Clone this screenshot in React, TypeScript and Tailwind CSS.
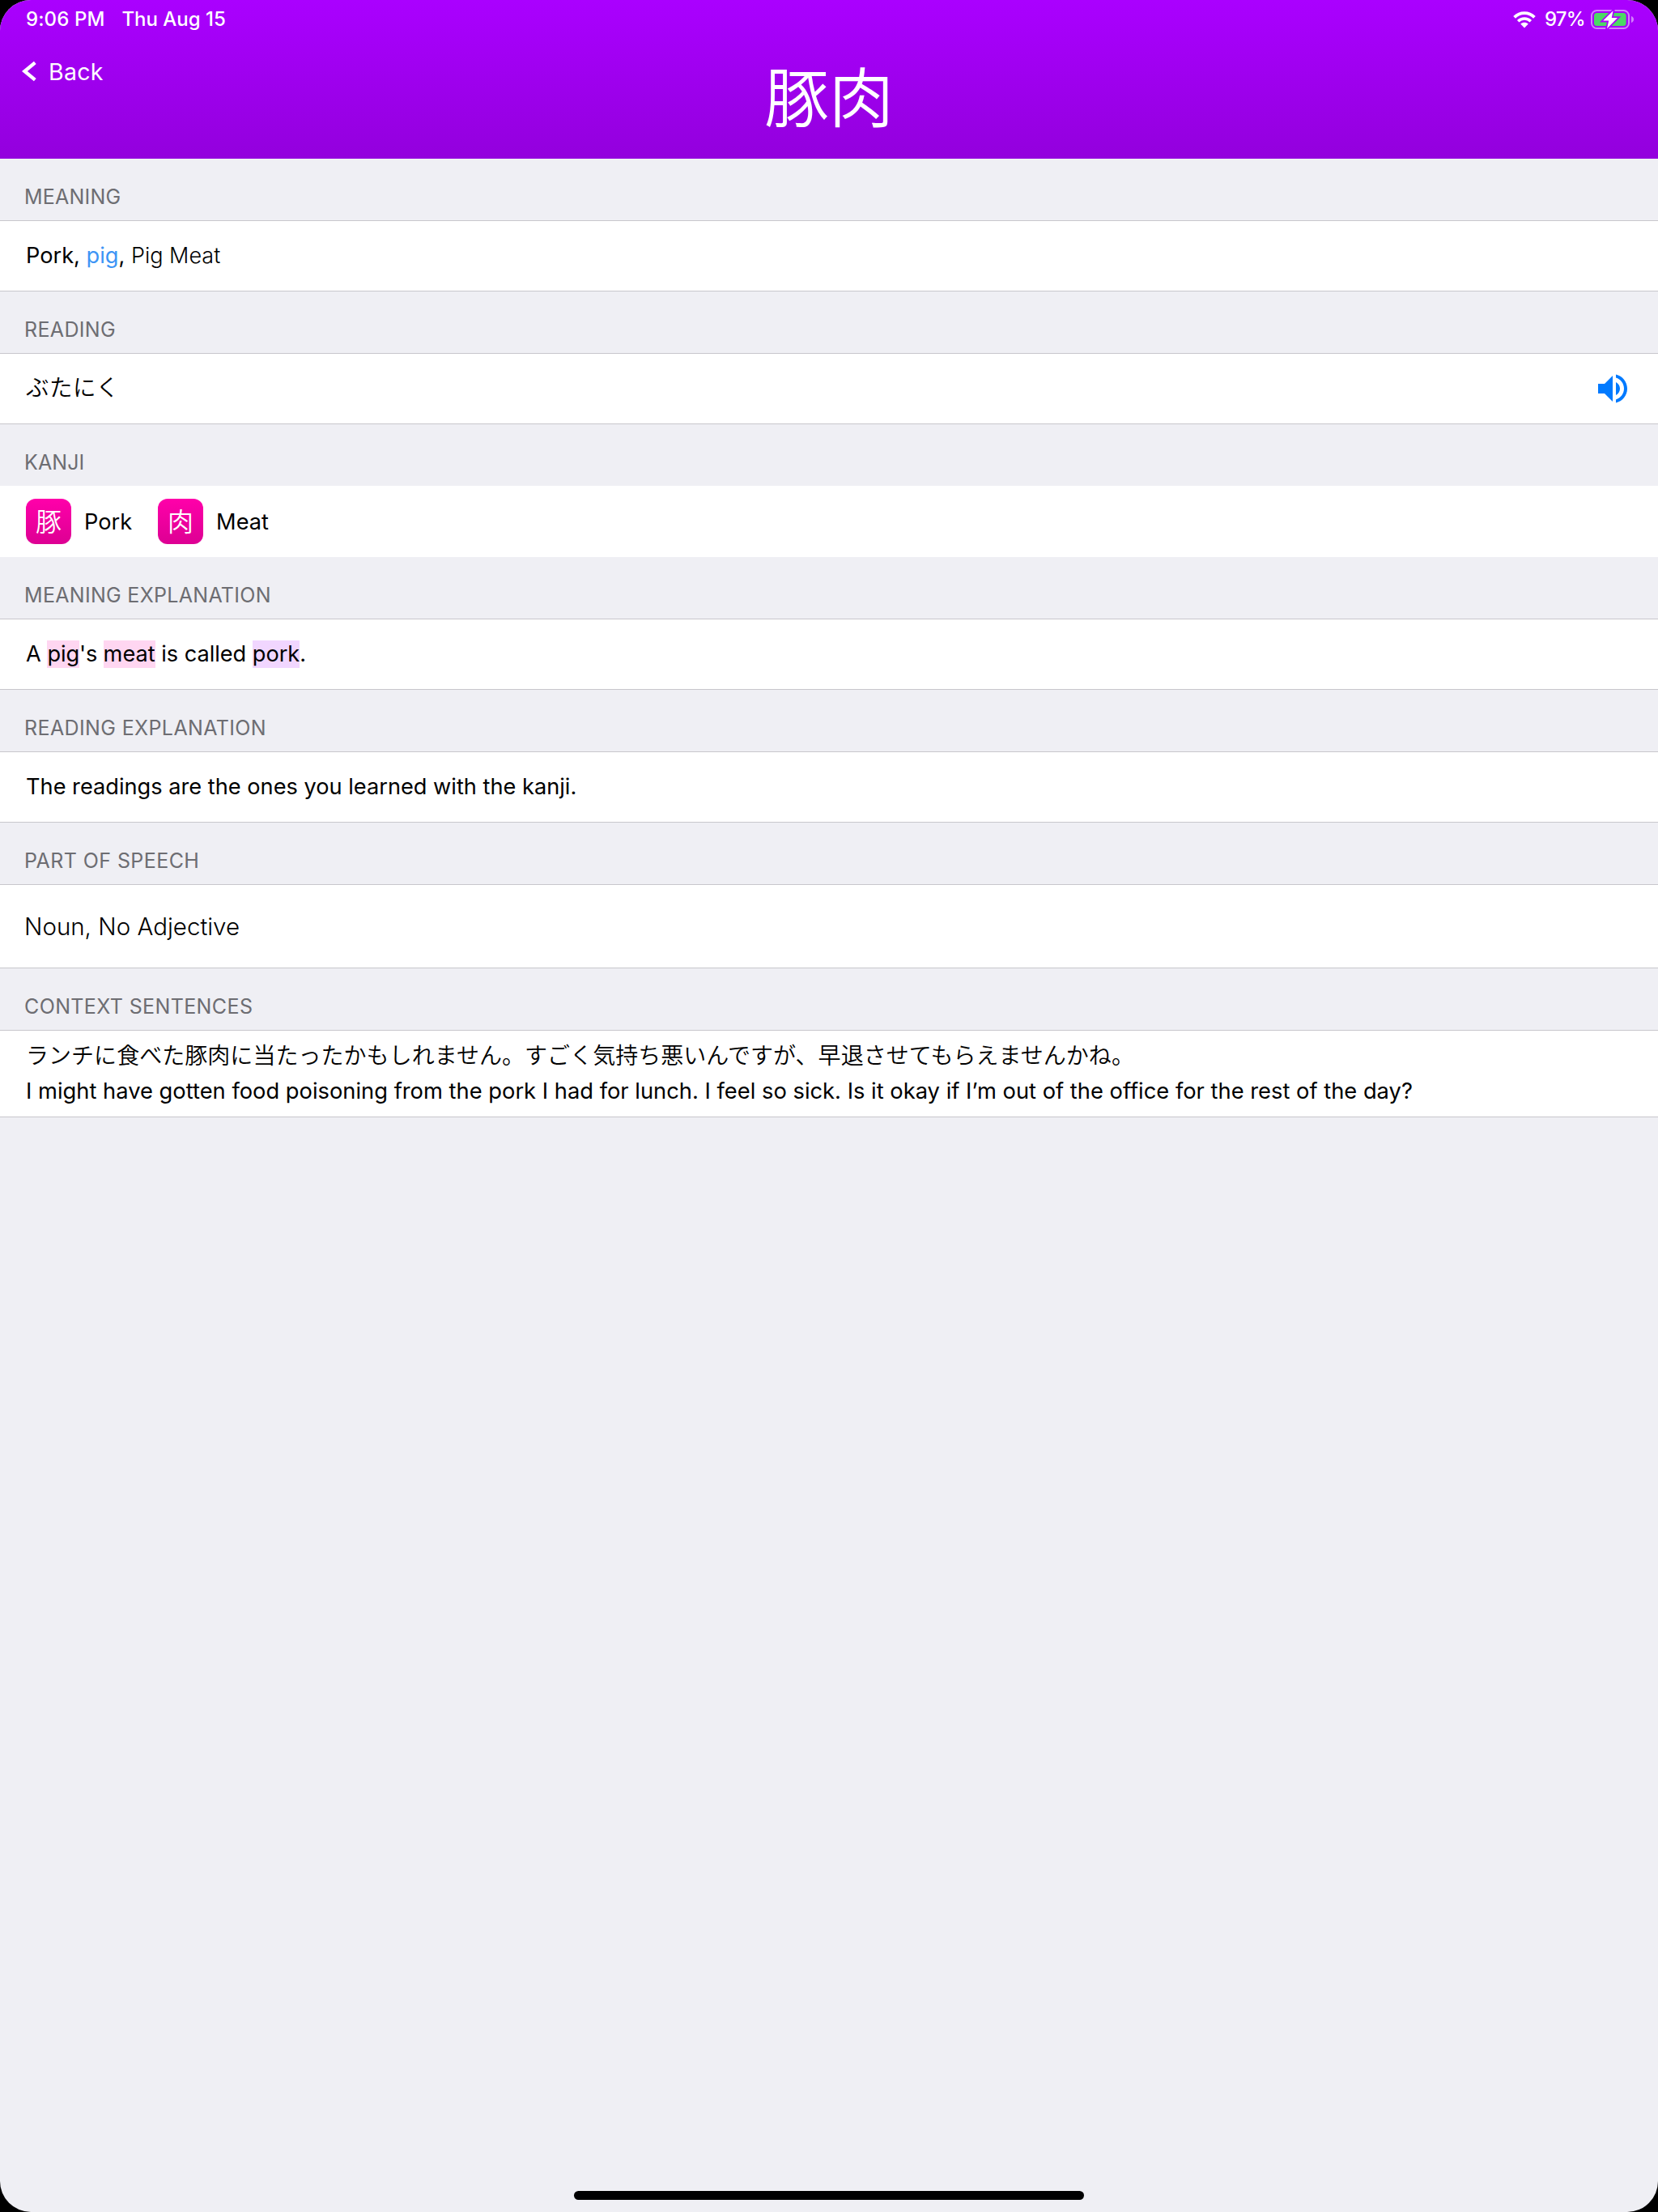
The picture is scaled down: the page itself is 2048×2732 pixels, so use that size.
import type { ReactNode } from 'react';

function WifiIcon() {
  return (
    <svg width="28" height="21" viewBox="0 0 28 21" fill="none">
      <path d="M1.6 7.4C8.4 0.4 19.6 0.4 26.4 7.4" stroke="#fff" strokeWidth="3.8" />
      <path d="M6.2 12.2C10.6 7.9 17.4 7.9 21.8 12.2" stroke="#fff" strokeWidth="3.6" />
      <path d="M14 20.4L9.2 15.6C12 13.2 16 13.2 18.8 15.6Z" fill="#fff" />
    </svg>
  );
}

function BatteryIcon() {
  return (
    <svg width="54" height="26" viewBox="0 0 54 26" fill="none">
      <rect x="1" y="2" width="46" height="22" rx="6.5" stroke="#fff" strokeOpacity="0.5" strokeWidth="2" />
      <path d="M50 9C51.8 9.5 53 10.9 53 13C53 15.1 51.8 16.5 50 17Z" fill="#fff" fillOpacity="0.5" />
      <rect x="4" y="5" width="39.6" height="16" rx="3.5" fill="#4cd964" />
      <path
        d="M27.6 2.2L15.2 14.6H22.2L20 24.2L33 11H25.8Z"
        fill="#fff"
        stroke="#a900fd"
        strokeWidth="3.6"
        paintOrder="stroke"
      />
    </svg>
  );
}

function SpeakerIcon() {
  return (
    <svg width="48" height="48" viewBox="0 0 24 24" fill="#007aff">
      <path d="M3 9v6h4l5 5V4L7 9H3zm11-1.03v8.05c1.48-.73 2.5-2.25 2.5-4.02 0-1.77-1.02-3.29-2.5-4.03zM14 3.23v2.06c2.89.86 5 3.54 5 6.71s-2.11 5.85-5 6.71v2.06c4.01-.91 7-4.49 7-8.77s-2.99-7.86-7-8.77z" />
    </svg>
  );
}

function SectionTitle({ tracking, children }: { tracking: string; children: string }) {
  return (
    <h2 className={`h-[76px] pt-8 pl-[30px] text-[25px] leading-[30px] text-[#6d6d72] ${tracking}`}>{children}</h2>
  );
}

function Cell({ size = 'h-[88px]', children }: { size?: string; children: ReactNode }) {
  return (
    <div className={`flex items-center border-y border-[#c8c7cc] bg-white px-8 whitespace-pre ${size}`}>{children}</div>
  );
}

function KanjiChip({ character, meaning }: { character: string; meaning: string }) {
  return (
    <div className="flex items-center gap-4">
      <span className="flex size-14 items-center justify-center rounded-xl bg-linear-to-b from-[#ff00aa] to-[#dd0093] pb-1 font-['Noto_Sans_CJK_JP',sans-serif] text-[32px] leading-none text-white [font-weight:350]">
        {character}
      </span>
      <span className="pt-px">{meaning}</span>
    </div>
  );
}

export default function App() {
  return (
    <div className="h-[2732px] w-[2048px] bg-black">
      <div className="flex h-full flex-col overflow-hidden rounded-[38px] bg-[#efeff4] font-[Inter,'Noto_Sans_CJK_JP',sans-serif] text-[27.2px] leading-8 text-black">
        <header className="h-[196px] bg-linear-to-b from-[#aa00ff] to-[#9300dd] text-white">
          <div className="flex h-12 items-center justify-between pr-[29px] pl-8 text-2xl font-medium">
            <div className="flex gap-[21px]">
              <span className="tracking-[0.1px]">9:06 PM</span>
              <span>Thu Aug 15</span>
            </div>
            <div className="flex items-center">
              <WifiIcon />
              <span className="ml-[11px] tracking-[-0.7px]">97%</span>
              <span className="ml-[7px]">
                <BatteryIcon />
              </span>
            </div>
          </div>
          <div className="grid h-[148px] grid-cols-3">
            <div className="mt-[18px] flex h-11 items-center pl-[27px] text-[28.5px] tracking-[0.3px]">
              <svg width="18" height="26" viewBox="0 0 18 26" fill="none" stroke="#fff" strokeWidth="4.4">
                <path d="M16.3 2.4L3.4 13L16.3 23.6" />
              </svg>
              <span className="ml-[15px] pt-0.5">Back</span>
            </div>
            <h1 className="self-center pb-3.5 text-center font-['Noto_Sans_CJK_JP',sans-serif] text-[80px] leading-none [font-weight:350]">
              豚肉
            </h1>
          </div>
        </header>

        <main>
          <SectionTitle tracking="tracking-[0.2px]">MEANING</SectionTitle>
          <Cell>
            <span>Pork, </span>
            <span className="text-[#3d95f5]">pig</span>
            <span>, </span>
            <span className="text-[27px] font-light">Pig Meat</span>
          </Cell>

          <SectionTitle tracking="tracking-[0.35px]">READING</SectionTitle>
          <Cell size="h-[88px] justify-between">
            <span className="pb-0.5 text-[28.5px] tracking-[0.5px] [font-weight:350]">ぶたにく</span>
            <SpeakerIcon />
          </Cell>

          <SectionTitle tracking="tracking-[0.1px]">KANJI</SectionTitle>
          <div className="flex h-[88px] items-center gap-8 bg-white px-8">
            <KanjiChip character="豚" meaning="Pork" />
            <KanjiChip character="肉" meaning="Meat" />
          </div>

          <SectionTitle tracking="tracking-[0.3px]">MEANING EXPLANATION</SectionTitle>
          <Cell>
            <span>A </span>
            <span className="bg-[#ffd6f1] leading-[34px] tracking-[-0.1px]">pig</span>
            <span className="tracking-[-0.2px]">'s </span>
            <span className="bg-[#ffd6f1] leading-[34px]">meat</span>
            <span className="tracking-[-0.05px]"> is called </span>
            <span className="bg-[#f1d6ff] leading-[34px]">pork</span>
            <span>.</span>
          </Cell>

          <SectionTitle tracking="tracking-[0.38px]">READING EXPLANATION</SectionTitle>
          <Cell>The readings are the ones you learned with the kanji.</Cell>

          <SectionTitle tracking="tracking-[0.42px]">PART OF SPEECH</SectionTitle>
          <Cell size="h-[104px]">
            <span className="-ml-0.5 text-[29.5px] [font-weight:340]">Noun, No Adjective</span>
          </Cell>

          <SectionTitle tracking="tracking-[0.38px]">CONTEXT SENTENCES</SectionTitle>
          <Cell size="h-[108px] pb-px">
            <div className="leading-[44px]">
              <p className="text-[28px] tracking-[0.04px] [font-weight:350]">
                ランチに食べた豚肉に当たったかもしれません。すごく気持ち悪いんですが、早退させてもらえませんかね。
              </p>
              <p className="text-[27.32px]">
                I might have gotten food poisoning from the pork I had for lunch. I feel so sick. Is it okay if I’m out of the office for the rest of the day?
              </p>
            </div>
          </Cell>
        </main>

        <div className="mx-auto mt-auto mb-[15px] h-[11px] w-[630px] rounded-full bg-black" />
      </div>
    </div>
  );
}
